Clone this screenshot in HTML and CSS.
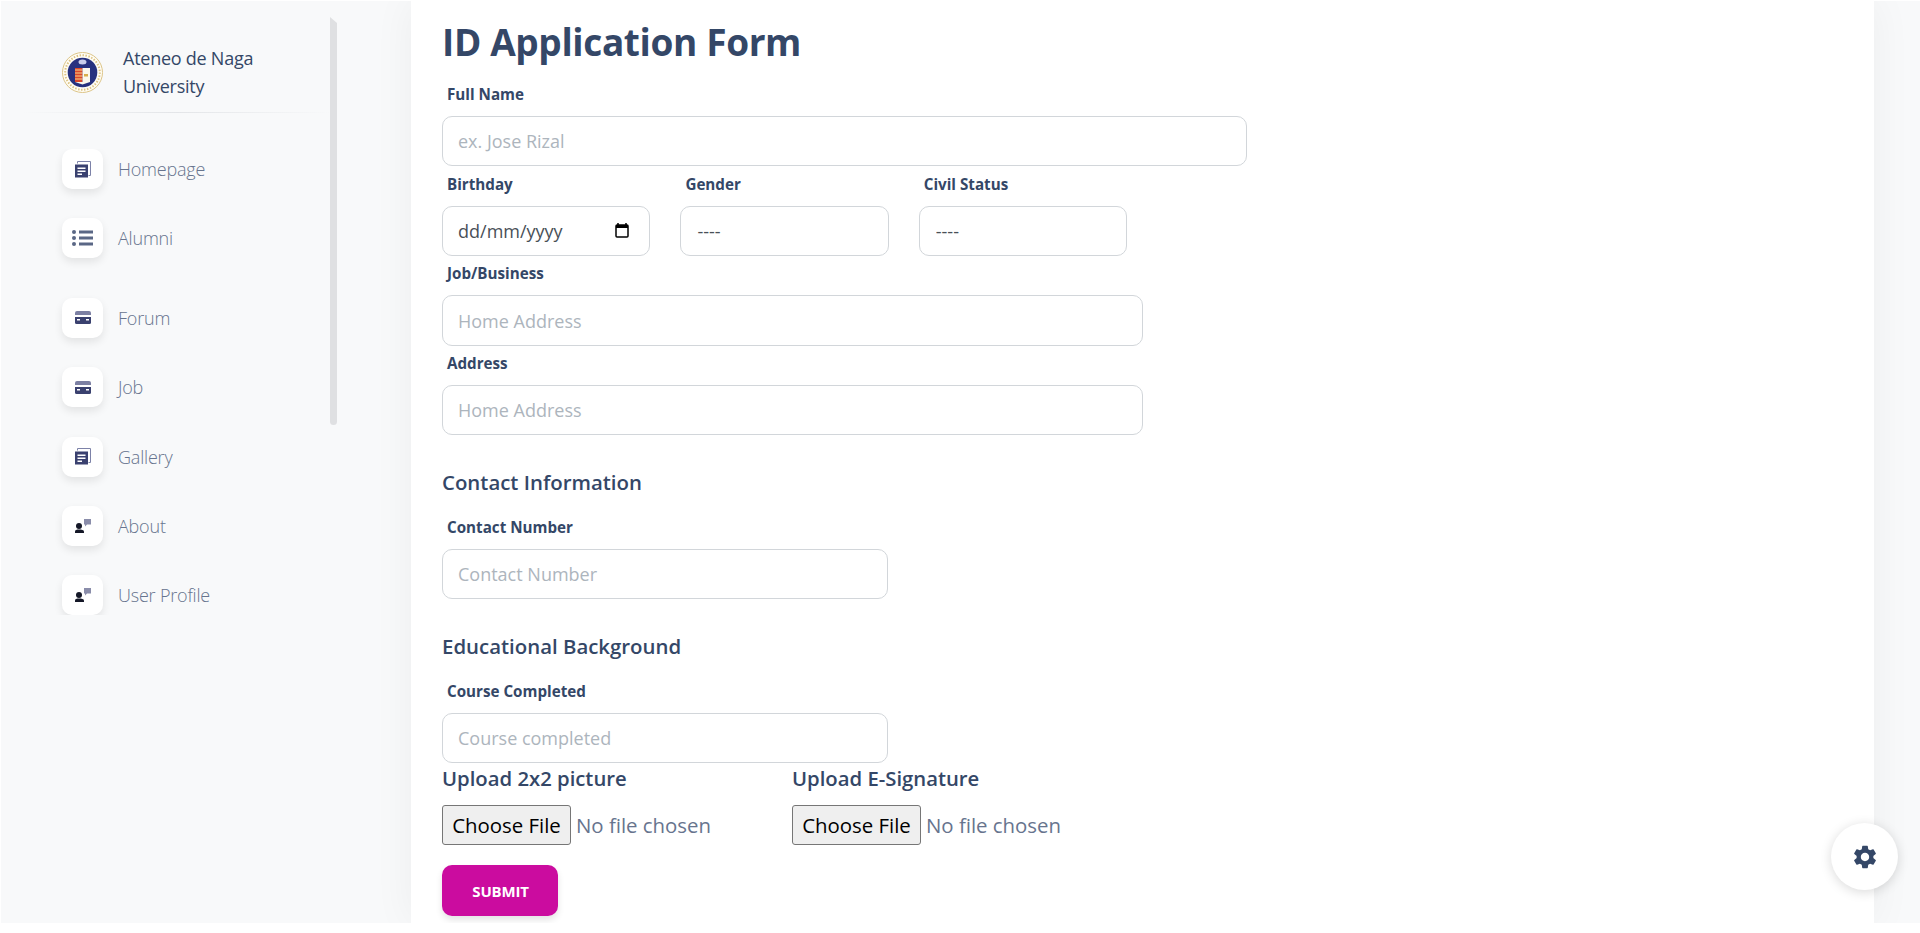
FILE: index.html
```html
<!DOCTYPE html>
<html lang="en">
<head>
  <meta charset="UTF-8">
  <title>ID Application Form</title>
  <link rel="stylesheet" href="styles.css">
</head>
<body>
  <svg class="defs" width="0" height="0">
    <symbol id="i-doc" viewBox="0 0 16 17">
      <path d="M2.500 2.500V0.500H15.500V14.500H13.500" fill="none" stroke="#7d82a8" stroke-width="1"/>
      <rect x="0" y="3.500" width="13" height="13" fill="#3a416f"/>
      <rect x="2.500" y="6.500" width="8" height="1.500" fill="#fff"/>
      <rect x="2.500" y="9.500" width="8" height="1.500" fill="#fff"/>
      <rect x="2.500" y="12.500" width="4.500" height="1.500" fill="#fff"/>
    </symbol>
    <symbol id="i-card" viewBox="0 0 16 13">
      <path d="M0 2a2 2 0 0 1 2-2h12a2 2 0 0 1 2 2v2H0z" fill="#7c80a3"/>
      <path d="M0 6h16v5.500a1.500 1.500 0 0 1-1.500 1.500h-13A1.500 1.500 0 0 1 0 11.500z" fill="#3a416f"/>
      <rect x="2" y="8" width="3" height="1.500" fill="#fff"/>
      <rect x="11" y="8" width="3" height="1.500" fill="#fff"/>
    </symbol>
    <symbol id="i-user" viewBox="0 0 16 14">
      <path d="M9 0H16V5.500H12L10 7.500V5.500H9z" fill="#8a8daa"/>
      <circle cx="4" cy="7" r="3" fill="#141727"/>
      <path d="M0 14V12.500C0 11 1.500 10.500 4 10.500S9 11 9 12.500V14z" fill="#141727"/>
    </symbol>
  </svg>

  <div class="shell">
    <aside class="sidebar">
      <div class="brand">
        <svg class="seal" viewBox="0 0 41 41">
          <circle cx="20.500" cy="20.500" r="20" fill="#fffdf5" stroke="#dcc487" stroke-width="1"/>
          <circle cx="20.500" cy="20.500" r="17.300" fill="none" stroke="#dcc487" stroke-width="2" stroke-dasharray="1.500 1.500"/>
          <circle cx="20.500" cy="20.500" r="14.800" fill="#27317f"/>
          <ellipse cx="20.500" cy="10" rx="4" ry="2.500" fill="#c9cdea"/>
          <rect x="13" y="16" width="7.500" height="14" fill="#d9472b"/>
          <path d="M13 18h7.500M13 21h7.500M13 24h7.500M13 27h7.500" stroke="#f4d58a" stroke-width="1"/>
          <rect x="20.500" y="16" width="7.500" height="14" fill="#fbf8ec"/>
          <rect x="22" y="22" width="4" height="2.500" fill="#d7ae4c"/>
          <path d="M13 30h15l-7.500 2.500z" fill="#fbf8ec"/>
        </svg>
        <span class="brand-name">Ateneo de Naga University</span>
      </div>
      <hr class="divider">
      <nav class="nav">
        <a class="nav-item" href="#"><span class="nav-icon"><svg width="16" height="17"><use href="#i-doc"/></svg></span>Homepage</a>
        <a class="nav-item" href="#"><span class="nav-icon">
          <svg width="21" height="16" viewBox="0 0 21 16" fill="#5a6785">
            <circle cx="2" cy="2" r="2"/><circle cx="2" cy="8" r="2"/><circle cx="2" cy="14" r="2"/>
            <rect x="7" y="0.500" width="14" height="3"/><rect x="7" y="6.500" width="14" height="3"/><rect x="7" y="12.500" width="14" height="3"/>
          </svg></span>Alumni</a>
        <a class="nav-item nav-item-gap" href="#"><span class="nav-icon"><svg width="16" height="13"><use href="#i-card"/></svg></span>Forum</a>
        <a class="nav-item" href="#"><span class="nav-icon"><svg width="16" height="13"><use href="#i-card"/></svg></span>Job</a>
        <a class="nav-item" href="#"><span class="nav-icon"><svg width="16" height="17"><use href="#i-doc"/></svg></span>Gallery</a>
        <a class="nav-item" href="#"><span class="nav-icon"><svg width="16" height="14"><use href="#i-user"/></svg></span>About</a>
        <a class="nav-item" href="#"><span class="nav-icon"><svg width="16" height="14"><use href="#i-user"/></svg></span>User Profile</a>
      </nav>
      <div class="scroll-thumb"></div>
    </aside>

    <main class="content">
      <h1>ID Application Form</h1>
      <form class="form">
        <div class="field w-full">
          <label for="fullname">Full Name</label>
          <input id="fullname" type="text" placeholder="ex. Jose Rizal">
        </div>
        <div class="row">
          <div class="field w-third">
            <label for="birthday">Birthday</label>
            <div class="date-wrap">
              <input id="birthday" class="date-input" type="text" placeholder="dd/mm/yyyy">
              <svg class="date-icon" width="14" height="15" viewBox="0 0 14 15">
                <path d="M3 0v2M11 0v2" stroke="#000" stroke-width="1.500"/>
                <rect x="1" y="2" width="12" height="12" rx="1" fill="none" stroke="#000" stroke-width="1.500"/>
                <rect x="1" y="2" width="12" height="3" fill="#000"/>
              </svg>
            </div>
          </div>
          <div class="field w-third">
            <label for="gender">Gender</label>
            <select id="gender"><option>----</option></select>
          </div>
          <div class="field w-third">
            <label for="civil">Civil Status</label>
            <select id="civil"><option>----</option></select>
          </div>
        </div>
        <div class="field w-wide">
          <label for="job">Job/Business</label>
          <input id="job" type="text" placeholder="Home Address">
        </div>
        <div class="field w-wide">
          <label for="address">Address</label>
          <input id="address" type="text" placeholder="Home Address">
        </div>

        <h2>Contact Information</h2>
        <div class="field w-half">
          <label for="contact">Contact Number</label>
          <input id="contact" type="text" placeholder="Contact Number">
        </div>

        <h2>Educational Background</h2>
        <div class="field w-half">
          <label for="course">Course Completed</label>
          <input id="course" type="text" placeholder="Course completed">
        </div>

        <div class="uploads">
          <div class="upload">
            <label class="upload-label" for="pic">Upload 2x2 picture</label>
            <input id="pic" type="file">
          </div>
          <div class="upload">
            <label class="upload-label" for="sig">Upload E-Signature</label>
            <input id="sig" type="file">
          </div>
        </div>
        <button class="submit" type="button">SUBMIT</button>
      </form>
    </main>

    <a class="settings" href="#">
      <svg width="28" height="28" viewBox="0 0 24 24" fill="#344767"><path d="M19.140 12.940c.04-.3.06-.61.06-.94 0-.32-.02-.64-.07-.94l2.030-1.580c.18-.14.23-.41.12-.61l-1.920-3.320c-.12-.22-.37-.29-.59-.22l-2.390.96c-.5-.38-1.030-.7-1.620-.94l-.36-2.540c-.04-.24-.24-.41-.48-.41h-3.840c-.24 0-.43.17-.47.41l-.36 2.540c-.59.24-1.130.57-1.620.94l-2.390-.96c-.22-.08-.47 0-.59.22L2.740 8.870c-.12.21-.08.47.12.61l2.030 1.580c-.05.3-.09.63-.09.94s.02.64.07.94l-2.030 1.580c-.18.14-.23.41-.12.61l1.920 3.320c.12.22.37.29.59.22l2.390-.96c.5.38 1.030.7 1.620.94l.36 2.54c.05.24.24.41.48.41h3.840c.24 0 .44-.17.47-.41l.36-2.54c.59-.24 1.130-.56 1.620-.94l2.390.96c.22.08.47 0 .59-.22l1.920-3.320c.12-.22.07-.47-.12-.61l-2.010-1.580zM12 15.600c-1.980 0-3.600-1.620-3.600-3.600s1.620-3.600 3.600-3.600 3.600 1.620 3.600 3.600-1.620 3.600-3.600 3.600z"/></svg>
    </a>
  </div>
</body>
</html>
```

FILE: styles.css
```css
html, body { margin: 0; height: 100%; background: #fff; overflow: hidden; }
body { font-family: "Open Sans", "Liberation Sans", sans-serif; color: #67748e; }
.defs { position: absolute; }

.shell { position: relative; display: flex; margin: 1px 0 0 1px; height: 922px; background: #f8f9fa; overflow: hidden; }

/* sidebar */
.sidebar { position: relative; width: 410px; flex: none; }
.brand { display: flex; align-items: center; gap: 20px; padding: 43px 0 0 61px; }
.seal { width: 41px; height: 41px; flex: none; }
.brand-name { width: 160px; font-size: 18px; line-height: 28px; color: #344767; letter-spacing: -0.25px; }
.divider { width: 310px; height: 1px; margin: 12px 0 0 20px; border: 0; background: linear-gradient(90deg, transparent, #e3e5e8 50%, transparent); }
.nav { display: flex; flex-direction: column; gap: 29.300px; height: 466px; margin-top: 36px; padding-left: 61px; overflow: hidden; }
.nav-item { display: flex; align-items: center; gap: 15px; flex: none; font-size: 18px; font-weight: 300; color: #67748e; letter-spacing: -0.2px; text-decoration: none; }
.nav-item-gap { margin-top: 10.400px; }
.nav-icon { display: flex; align-items: center; justify-content: center; width: 41px; height: 40px; background: #fff; border-radius: 10px; box-shadow: 0 4px 8px rgba(0,0,0,.09); }
.scroll-thumb { position: absolute; left: 329px; top: 16px; width: 7px; height: 408px; background: #dfe0e2; border-radius: 0 0 4px 4px; clip-path: polygon(0 0, 100% 6px, 100% 100%, 0 100%); }

/* main column */
.content { width: 1463px; flex: none; padding: 0 0 0 31px; box-sizing: border-box; background: #fff; box-shadow: 0 0 40px rgba(0,0,0,.05); }
h1 { margin: 14px 0 0; font-size: 37px; line-height: 54px; font-weight: 700; color: #344767; letter-spacing: -0.37px; }
h2 { margin: 30.600px 0 0; font-size: 20.400px; line-height: 32px; font-weight: 600; color: #344767; }
label { display: block; margin: 0 0 0 5px; font-size: 15.200px; line-height: 20px; font-weight: 700; color: #344767; }

.form { padding-top: 15px; }
.field { display: flex; flex-direction: column; gap: 12px; }
.field + .field, .row + .field, .field + .row { margin-top: 7.270px; }
.w-full { width: 805px; }
.w-wide { width: 701px; }
.w-half { width: 446px; }
.w-third { width: 208.400px; }
.row { display: flex; gap: 30px; }
.row .field { margin-top: 0; }

input[type=text], select { width: 100%; height: 50.400px; box-sizing: border-box; padding: 0 15px; background: #fff; border: 1px solid #d2d6da; border-radius: 10px; font: 18px "Open Sans", sans-serif; color: #495057; appearance: none; }
input::placeholder { color: #adb5bd; opacity: 1; }
select { padding-left: 16px; color: #495057; }

.date-wrap { position: relative; }
.date-input::placeholder { color: #495057; }
.date-icon { position: absolute; right: 21px; top: 17px; }

h2 + .field { margin-top: 19px; }

.uploads { display: flex; margin-top: 1px; }
.upload { width: 350px; }
.upload-label { margin: 0; font-size: 20.300px; line-height: 28px; font-weight: 600; }
input[type=file] { display: block; margin-top: 13px; font: 20.400px "Open Sans", sans-serif; color: #67748e; }
input[type=file]::file-selector-button { width: 129px; height: 40px; margin-right: 5px; padding: 0; background: #efefef; border: 1px solid #767676; border-radius: 3px; font: 20.400px "Open Sans", sans-serif; color: #000; }
.submit { display: block; width: 116px; height: 51px; margin-top: 20px; padding: 0 0 0 1px; border: 0; border-radius: 10px; background: #cb0c9f; color: #fff; font: 700 15px "Open Sans", sans-serif; letter-spacing: -0.2px; box-shadow: 0 4px 7px rgba(0,0,0,.11); }

/* settings button floats over the page */
.settings { position: absolute; left: 1830px; top: 822px; display: flex; align-items: center; justify-content: center; width: 67px; height: 67px; background: #fff; border-radius: 50%; box-shadow: 0 2px 12px rgba(0,0,0,.15); }
```
